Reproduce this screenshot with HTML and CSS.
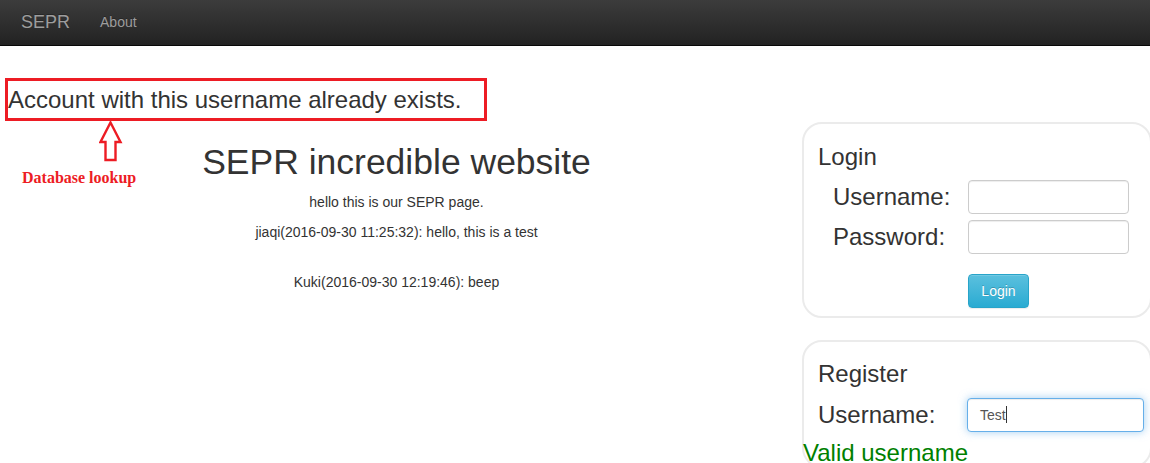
FILE: index.html
```html
<!DOCTYPE html>
<html lang="en">
<head>
<meta charset="utf-8">
<title>SEPR</title>
<link rel="stylesheet" href="styles.css">
</head>
<body>
<nav class="navbar">
  <a class="brand" href="#">SEPR</a>
  <a class="nav-link" href="#">About</a>
</nav>
<div class="alert-row">
  <div class="alert">Account with this username already exists.</div>
</div>
<div class="layout">
  <main class="main">
    <div class="annotation">
      <svg class="arrow" width="24" height="41" viewBox="0 0 24 41">
        <path d="M11.5 1.5 L21.5 21 L16.5 21 L16.5 39 L6.5 39 L6.5 21 L1.5 21 Z" fill="none" stroke="#ed1c24" stroke-width="2.4" stroke-linejoin="miter"/>
      </svg>
      <div class="note">Database lookup</div>
    </div>
    <h1 class="title">SEPR incredible website</h1>
    <p class="intro">hello this is our SEPR page.</p>
    <p class="post">jiaqi(2016-09-30 11:25:32): hello, this is a test</p>
    <p class="post">Kuki(2016-09-30 12:19:46): beep</p>
  </main>
  <aside class="side">
    <section class="panel login-panel">
      <h3 class="panel-title">Login</h3>
      <div class="login-grid">
        <label class="field-label">Username:</label>
        <input class="input" type="text">
        <label class="field-label">Password:</label>
        <input class="input" type="password">
        <span class="spacer"></span>
        <button class="btn-info" type="button">Login</button>
      </div>
    </section>
    <section class="panel register-panel">
      <h3 class="panel-title">Register</h3>
      <div class="register-row">
        <label class="field-label reg-label">Username:</label>
        <div class="input focused"><span class="typed">Test</span><span class="caret"></span></div>
      </div>
      <div class="valid">Valid username</div>
    </section>
  </aside>
</div>
</body>
</html>
```
FILE: styles.css
```css
html, body {
  margin: 0;
  padding: 0;
  overflow: hidden;
  background: #fff;
}
body {
  font-family: "Liberation Sans", Arial, sans-serif;
  font-size: 14px;
  line-height: 20px;
  color: #333;
  width: 1150px;
  height: 463px;
}
.navbar {
  box-sizing: border-box;
  height: 46px;
  border-bottom: 1px solid #080808;
  background: linear-gradient(to bottom, #3c3c3c 0, #222 100%);
  display: flex;
  align-items: flex-start;
  padding-top: 12px;
}
.brand {
  margin-left: 21px;
  font-size: 18px;
  line-height: 20px;
  color: #9d9d9d;
  text-decoration: none;
  text-shadow: 0 -1px 0 rgba(0,0,0,.25);
}
.nav-link {
  margin-left: 30px;
  font-size: 14px;
  line-height: 20px;
  color: #9d9d9d;
  text-decoration: none;
  text-shadow: 0 -1px 0 rgba(0,0,0,.25);
}
.alert-row {
  padding-top: 32px;
}
.alert {
  margin-left: 5px;
  width: 476px;
  border: 3px solid #ed1c24;
  font-size: 24px;
  line-height: 35px;
  padding: 1px 0 1px 0;
  white-space: nowrap;
}
.layout {
  display: grid;
  grid-template-columns: 793px 350px;
  column-gap: 9px;
}
.main {
  position: relative;
  text-align: center;
}
.annotation {
  position: absolute;
  left: 0;
  top: 0;
  width: 160px;
  height: 70px;
}
.arrow {
  position: absolute;
  left: 99px;
  top: 0;
}
.note {
  position: absolute;
  left: 22px;
  top: 49px;
  font-family: "Liberation Serif", "Times New Roman", serif;
  font-weight: bold;
  font-size: 16px;
  line-height: 15px;
  color: #ed1c24;
  white-space: nowrap;
}
.title {
  margin: 22px 0 10px;
  font-size: 35.5px;
  font-weight: 500;
  line-height: 1.1;
}
.intro {
  margin: 0 0 10px;
}
.post {
  margin: 0 0 30px;
}
.side {
  padding-top: 1px;
}
.panel {
  border: 2px solid #ebebeb;
  border-radius: 20px;
  padding: 0 0 0 14px;
}
.panel-title {
  margin: 19px 0 10px;
  font-size: 24px;
  font-weight: 500;
  line-height: 1.1;
}
.login-panel .panel-title {
  margin-top: 20px;
}
.login-grid {
  display: grid;
  grid-template-columns: 135px 161px;
  grid-template-rows: 34px 34px auto;
  row-gap: 6px;
  padding-left: 15px;
  padding-bottom: 8px;
  align-items: center;
}
.field-label {
  font-size: 24px;
  line-height: 26px;
}
.input {
  box-sizing: border-box;
  width: 161px;
  height: 34px;
  border: 1px solid #ccc;
  border-radius: 4px;
  box-shadow: inset 0 1px 1px rgba(0,0,0,.075);
  padding: 6px 12px;
  font-family: inherit;
  font-size: 14px;
  color: #555;
  background: #fff;
  margin: 0;
}
.spacer {
  grid-row: 3;
}
.btn-info {
  grid-row: 3;
  margin-top: 14px;
  justify-self: start;
  box-sizing: border-box;
  height: 34px;
  width: 61px;
  padding: 6px 12px;
  font-family: inherit;
  font-size: 14px;
  line-height: 20px;
  color: #fff;
  background: linear-gradient(to bottom, #5bc0de 0, #2aabd2 100%);
  border: 1px solid #28a4c9;
  border-radius: 4px;
  text-shadow: 0 -1px 0 rgba(0,0,0,.2);
  box-shadow: inset 0 1px 0 rgba(255,255,255,.15), 0 1px 1px rgba(0,0,0,.075);
}
.register-panel {
  margin-top: 22px;
}
.register-row {
  display: flex;
  align-items: center;
}
.reg-label {
  width: 149px;
}
.input.focused {
  width: 177px;
  height: 34px;
  border-color: #66afe9;
  box-shadow: inset 0 1px 1px rgba(0,0,0,.075), 0 0 8px rgba(102,175,233,.6);
  display: flex;
  align-items: center;
  line-height: 20px;
}
.caret {
  display: inline-block;
  width: 1px;
  height: 17px;
  background: #333;
}
.valid {
  margin: 8px 0 0 -15px;
  font-size: 24px;
  line-height: 26px;
  color: #008000;
  white-space: nowrap;
}
```
